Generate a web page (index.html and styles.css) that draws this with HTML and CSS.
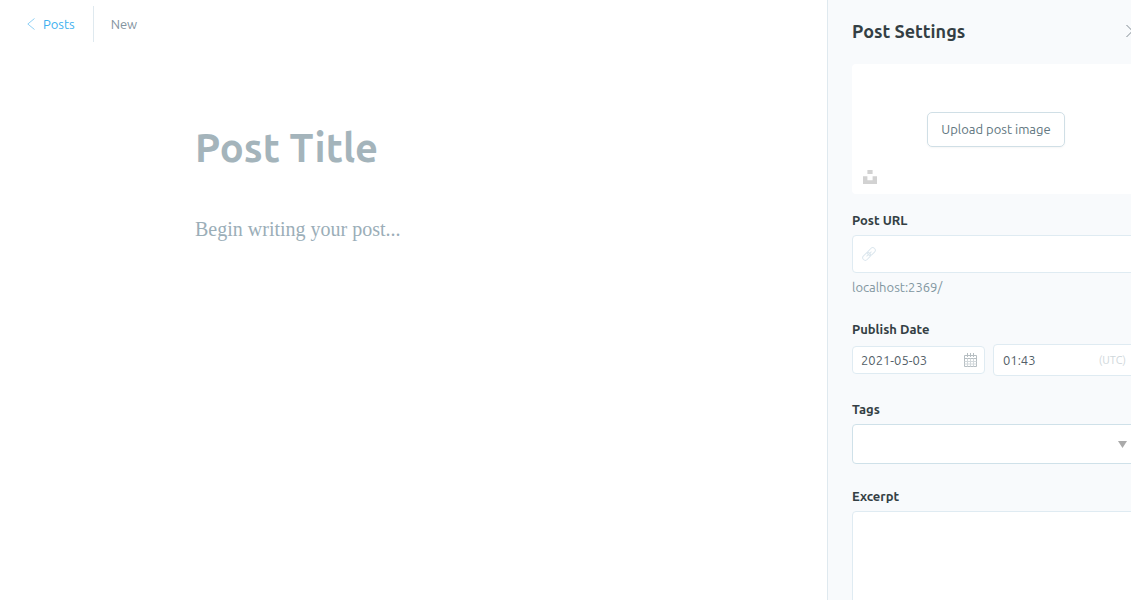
FILE: index.html
```
<!DOCTYPE html>
<html lang="en">
<head>
<meta charset="utf-8">
<title>New Post</title>
<link rel="stylesheet" href="styles.css">
</head>
<body>
<div class="app">
  <main class="editor">
    <header class="editor-header">
      <a class="back" href="#posts">
        <svg class="back-icon" width="8" height="12" viewBox="0 0 8 12"><path d="M7.500 .5L.8 6l6.700 5.500"/></svg>
        Posts
      </a>
      <span class="status">New</span>
    </header>
    <div class="canvas">
      <input class="title" type="text" placeholder="Post Title" aria-label="Post title">
      <textarea class="body" placeholder="Begin writing your post..." aria-label="Post body"></textarea>
    </div>
  </main>
  <aside class="settings">
    <div class="settings-header">
      <h1 class="settings-title">Post Settings</h1>
      <button class="close" type="button" aria-label="Close">
        <svg width="14" height="12" viewBox="0 0 14 12"><path d="M.5 0l12 12M12.500 0L.5 12"/></svg>
      </button>
    </div>
    <div class="uploader">
      <button class="upload" type="button">Upload post image</button>
      <button class="unsplash" type="button" aria-label="Unsplash">
        <svg width="14" height="14" viewBox="0 0 14 14"><path d="M4.400 0h5.200v4H4.400zM0 6.200h4.400v4h5.200v-4H14V14H0z"/></svg>
      </button>
    </div>
    <div class="field">
      <label class="label" for="url">Post URL</label>
      <div class="control url">
        <svg class="link-icon" width="14" height="14" viewBox="0 0 14 14"><g transform="rotate(-45 7 7)"><rect x="-.8" y="4.400" width="8.800" height="5.200" rx="2.600"/><rect x="6" y="4.400" width="8.800" height="5.200" rx="2.600"/><path d="M3.500 7h7"/></g></svg>
        <input class="input" id="url" type="text">
      </div>
      <p class="hint">localhost:2369/</p>
    </div>
    <div class="field">
      <label class="label" for="date">Publish Date</label>
      <div class="dates">
        <div class="control date">
          <input class="input" id="date" type="text" value="2021-05-03">
          <svg class="calendar-icon" width="13" height="14" viewBox="0 0 13 14"><path d="M.5 2.500h12v11H.5zM.5 5.500h12M3.500 0v4M6.500 0v4M9.500 0v4"/><path class="grid" d="M3.500 5.500v8M6.500 5.500v8M9.500 5.500v8M.5 8.500h12M.5 11h12"/></svg>
        </div>
        <div class="control time">
          <input class="input" type="text" value="01:43" aria-label="Publish time">
          <span class="zone">(UTC)</span>
        </div>
      </div>
    </div>
    <div class="field">
      <label class="label" for="tags">Tags</label>
      <div class="control tags">
        <select class="input" id="tags"><option></option></select>
        <svg class="arrow" width="9" height="7" viewBox="0 0 9 7"><path d="M0 0h9L4.500 7z"/></svg>
      </div>
    </div>
    <div class="field">
      <label class="label" for="excerpt">Excerpt</label>
      <textarea class="control excerpt" id="excerpt"></textarea>
    </div>
  </aside>
</div>
</body>
</html>
```
FILE: styles.css
```
* {
  box-sizing: border-box;
}
body {
  margin: 0;
  font-family: "Ubuntu", "Noto Sans", "Open Sans", sans-serif;
  font-size: 13px;
  line-height: 20px;
  color: #394047;
}
button, input, select, textarea {
  margin: 0;
  padding: 0;
  border: 0;
  outline: 0;
  background: none;
  font: inherit;
  color: inherit;
}
.app {
  display: flex;
  height: 100vh;
  overflow: hidden;
}
.editor {
  flex: 1;
  min-width: 0;
  background: #fff;
}
.editor-header {
  display: flex;
  align-items: center;
  padding: 6px 27px;
}
.back {
  display: flex;
  align-items: center;
  gap: 8px;
  height: 36px;
  padding-right: 18px;
  border-right: 1px solid #dfe9ef;
  color: #3eb0ef;
  text-decoration: none;
}
.back-icon {
  fill: none;
  stroke: #8fd0f5;
  stroke-width: 1;
}
.status {
  padding-left: 17px;
  color: #8393a0;
}
.canvas {
  display: flex;
  flex-direction: column;
  gap: 40px;
  padding: 70px 24px 0 195px;
}
.title {
  width: 100%;
  height: 58px;
  font-size: 40px;
  font-weight: 700;
}
.title::placeholder {
  color: #a4b4bb;
  opacity: 1;
}
.body {
  width: 100%;
  height: 200px;
  resize: none;
  font-family: "Liberation Serif", serif;
  font-size: 20px;
  line-height: 26px;
}
.body::placeholder {
  color: #9baeb8;
  opacity: 1;
}
.settings {
  flex: none;
  width: 337px;
  margin-right: -33px;
  padding: 0 24px;
  overflow: hidden;
  border-left: 1px solid #dfe9ef;
  background: #f8fafc;
}
.settings-header {
  display: flex;
  align-items: center;
  justify-content: space-between;
  height: 64px;
  padding-bottom: 2px;
}
.settings-title {
  margin: 0;
  font-size: 18px;
  line-height: 24px;
  color: #343f44;
}
.close {
  display: flex;
}
.close svg {
  fill: none;
  stroke: #808a92;
}
.uploader {
  position: relative;
  display: flex;
  align-items: center;
  justify-content: center;
  height: 130px;
  margin-bottom: 16px;
  border-radius: 4px;
  background: #fff;
}
.upload {
  height: 35px;
  padding: 0 13px;
  border: 1px solid #d0dfe6;
  border-radius: 5px;
  color: #617680;
  box-shadow: 0 1px 2px #0000000a;
}
.unsplash {
  position: absolute;
  left: 11px;
  bottom: 10px;
  display: flex;
}
.unsplash svg {
  fill: #d2d2d2;
}
.field {
  margin-bottom: 22px;
}
.label {
  display: block;
  margin-bottom: 5px;
  font-weight: 700;
  color: #343f44;
}
.control {
  display: flex;
  align-items: center;
  border: 1px solid #dfebf2;
  border-radius: 4px;
  background: #fff;
}
.input {
  flex: 1;
  width: 0;
  min-width: 0;
  color: #536068;
}
.url {
  gap: 8px;
  height: 38px;
  padding: 0 9px;
}
.link-icon {
  fill: none;
  stroke: #dce7ee;
  stroke-width: 1;
}
.hint {
  margin: 4px 0 0;
  color: #8196a0;
}
.dates {
  display: flex;
  align-items: center;
  gap: 8px;
  padding-bottom: 1px;
}
.date {
  width: 133px;
  height: 28px;
  padding: 0 7px 0 8px;
}
.calendar-icon {
  fill: none;
  stroke: #b6bec2;
}
.grid {
  stroke: #d3d9dc;
}
.time {
  flex: 1;
  height: 32px;
  padding: 0 13px 0 9px;
}
.zone {
  font-size: 11px;
  color: #cfd7db;
}
.tags {
  position: relative;
  height: 40px;
  border-color: #cfe1e9;
}
.tags .input {
  height: 100%;
  padding: 0 28px 0 8px;
  appearance: none;
}
.arrow {
  position: absolute;
  right: 12px;
  pointer-events: none;
  fill: #aaa;
}
.excerpt {
  display: block;
  width: 100%;
  height: 108px;
  padding: 8px;
  resize: none;
}
```
